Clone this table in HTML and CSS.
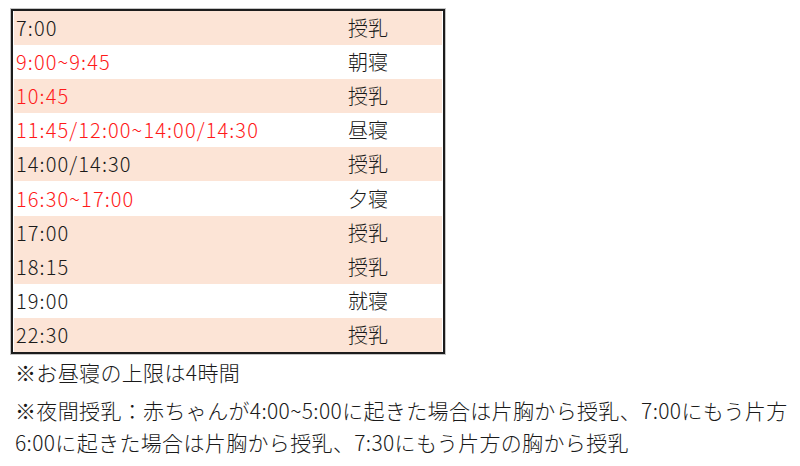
FILE: index.html
```html
<!DOCTYPE html>
<html lang="ja">
<head>
<meta charset="utf-8">
<link rel="stylesheet" href="styles.css">
</head>
<body>
<div class="frame">
  <div class="table">
    <div class="row peach"><span class="time">7:00</span><span class="act">授乳</span></div>
    <div class="row"><span class="time red">9:00~9:45</span><span class="act">朝寝</span></div>
    <div class="row peach"><span class="time red">10:45</span><span class="act">授乳</span></div>
    <div class="row"><span class="time red">11:45/12:00~14:00/14:30</span><span class="act">昼寝</span></div>
    <div class="row peach"><span class="time">14:00/14:30</span><span class="act">授乳</span></div>
    <div class="row"><span class="time red">16:30~17:00</span><span class="act">夕寝</span></div>
    <div class="row peach"><span class="time">17:00</span><span class="act">授乳</span></div>
    <div class="row peach"><span class="time">18:15</span><span class="act">授乳</span></div>
    <div class="row"><span class="time">19:00</span><span class="act">就寝</span></div>
    <div class="row peach"><span class="time">22:30</span><span class="act">授乳</span></div>
  </div>
</div>
<div class="notes">
  <p class="note first">※お昼寝の上限は4時間</p>
  <p class="note second">※夜間授乳：赤ちゃんが4:00~5:00に起きた場合は片胸から授乳、7:00にもう片方</p>
  <p class="note">6:00に起きた場合は片胸から授乳、7:30にもう片方の胸から授乳</p>
</div>
</body>
</html>
```
FILE: styles.css
```css
html, body {
  margin: 0;
  padding: 0;
  background: #ffffff;
}
body {
  font-family: "Noto Sans CJK JP", "Noto Sans", sans-serif;
  font-weight: 300;
  color: #1a1a1a;
}
.frame {
  margin: 8px 0 0 10px;
  width: 434px;
  border: 1px solid #c4c4c4;
}
.table {
  border: 2px solid #1c1c1c;
  background: #ffffff;
  padding: 0 1px;
}
.row {
  display: grid;
  grid-template-columns: 332px 1fr;
  align-items: center;
  height: 34.1px;
  padding-left: 2px;
  font-size: 20px;
  line-height: 1;
  white-space: nowrap;
}
.time {
  letter-spacing: 1.1px;
}
.peach {
  background: #fce4d6;
}
.red {
  color: #ff1a1a;
}
.notes {
  padding-left: 15px;
}
.note {
  margin: 0;
  font-size: 21px;
  line-height: 32px;
  white-space: nowrap;
  letter-spacing: 0.35px;
}
.note.first {
  line-height: 34px;
}
.note.second {
  margin-top: 5px;
}
```
